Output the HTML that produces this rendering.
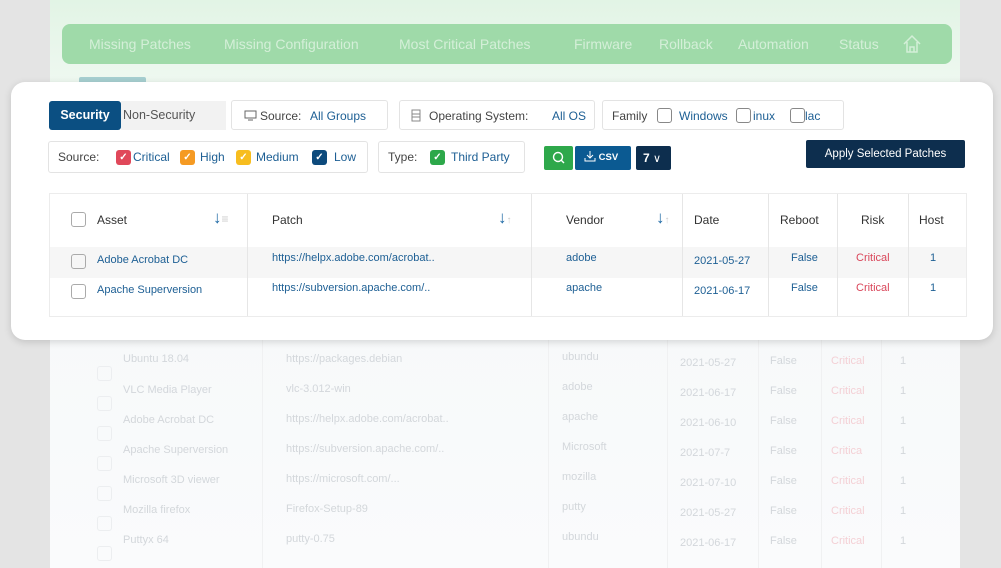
<!DOCTYPE html>
<html><head><meta charset="utf-8"><style>
*{box-sizing:border-box;margin:0;padding:0}
body{width:1001px;height:568px;overflow:hidden;background:#e4e4e4;font-family:"Liberation Sans",sans-serif;position:relative}
.a{position:absolute;white-space:nowrap}
.panel{left:50px;top:0;width:910px;height:568px;background:linear-gradient(#e2f4e5 0,#eef8f0 80px,#f7f9fa 330px,#fafbfc 100%)}
.nav{left:62px;top:24px;width:890px;height:40px;background:#9fdaa9;border-radius:8px;color:#d4efd8;font-size:14px}
.nav span{position:absolute;top:12px;white-space:nowrap}
.card{left:11px;top:82px;width:982px;height:258px;background:#fff;border-radius:14px;box-shadow:0 2px 8px rgba(0,0,0,.15)}
.box{position:absolute;border:1px solid #e3e3e3;border-radius:3px;background:#fff;font-size:12px;color:#444}
.box .a{top:0;line-height:30px}
.bl{color:#1d5f94}
.cb{position:absolute;top:8px;width:15px;height:15px;border-radius:3px;color:#fff;font-size:10px;text-align:center;line-height:15px;font-weight:bold}
.ec{position:absolute;top:7px;width:15px;height:15px;border:1px solid #888;border-radius:3px;background:#fff}
.t{font-size:12px;color:#333}
.vl{position:absolute;width:1px;background:#e6e6e6}
.f{color:#d3d7db;font-size:11px;position:absolute;white-space:nowrap}
.fr{color:#f4d0d5}
.fc{position:absolute;left:97px;width:15px;height:15px;border:1px solid #eceef0;border-radius:3px}
</style></head><body>
<div class="a panel"></div>
<div class="a nav">
<span style="left:27px">Missing Patches</span><span style="left:162px">Missing Configuration</span><span style="left:337px">Most Critical Patches</span><span style="left:512px">Firmware</span><span style="left:597px">Rollback</span><span style="left:676px">Automation</span><span style="left:777px">Status</span>
<svg class="a" style="left:840px;top:10px" width="20" height="20" viewBox="0 0 20 20" fill="none" stroke="#d4efd8" stroke-width="1.5"><path d="M2 10L10 2l8 8M5 8v10h10V8M8 18v-5h4v5"/></svg>
</div>
<div class="a" style="left:79px;top:77px;width:67px;height:8px;background:#a6cfd0;border-radius:2px"></div>

<div class="a" style="left:78px;top:340px;width:857px;height:228px">
<div class="vl" style="left:184px;top:0;height:228px;background:#f0f1f2"></div>
<div class="vl" style="left:470px;top:0;height:228px;background:#f0f1f2"></div>
<div class="vl" style="left:589px;top:0;height:228px;background:#f0f1f2"></div>
<div class="vl" style="left:680px;top:0;height:228px;background:#f0f1f2"></div>
<div class="vl" style="left:743px;top:0;height:228px;background:#f0f1f2"></div>
<div class="vl" style="left:803px;top:0;height:228px;background:#f0f1f2"></div>
</div>
<div class="fc" style="top:366px"></div><div class="fc" style="top:396px"></div><div class="fc" style="top:426px"></div><div class="fc" style="top:456px"></div><div class="fc" style="top:486px"></div><div class="fc" style="top:516px"></div><div class="fc" style="top:546px"></div>
<div class="f" style="left:123px;top:353px">Ubuntu 18.04</div><div class="f" style="left:286px;top:353px">https://packages.debian</div><div class="f" style="left:562px;top:351px">ubundu</div><div class="f" style="left:680px;top:357px">2021-05-27</div><div class="f" style="left:770px;top:355px">False</div><div class="f fr" style="left:831px;top:355px">Critical</div><div class="f" style="left:900px;top:355px">1</div>
<div class="f" style="left:123px;top:384px">VLC Media Player</div><div class="f" style="left:286px;top:383px">vlc-3.012-win</div><div class="f" style="left:562px;top:381px">adobe</div><div class="f" style="left:680px;top:387px">2021-06-17</div><div class="f" style="left:770px;top:385px">False</div><div class="f fr" style="left:831px;top:385px">Critical</div><div class="f" style="left:900px;top:385px">1</div>
<div class="f" style="left:123px;top:414px">Adobe Acrobat DC</div><div class="f" style="left:286px;top:413px">https://helpx.adobe.com/acrobat..</div><div class="f" style="left:562px;top:411px">apache</div><div class="f" style="left:680px;top:417px">2021-06-10</div><div class="f" style="left:770px;top:415px">False</div><div class="f fr" style="left:831px;top:415px">Critical</div><div class="f" style="left:900px;top:415px">1</div>
<div class="f" style="left:123px;top:444px">Apache Superversion</div><div class="f" style="left:286px;top:443px">https://subversion.apache.com/..</div><div class="f" style="left:562px;top:441px">Microsoft</div><div class="f" style="left:680px;top:447px">2021-07-7</div><div class="f" style="left:770px;top:445px">False</div><div class="f fr" style="left:831px;top:445px">Critica</div><div class="f" style="left:900px;top:445px">1</div>
<div class="f" style="left:123px;top:474px">Microsoft 3D viewer</div><div class="f" style="left:286px;top:473px">https://microsoft.com/...</div><div class="f" style="left:562px;top:471px">mozilla</div><div class="f" style="left:680px;top:477px">2021-07-10</div><div class="f" style="left:770px;top:475px">False</div><div class="f fr" style="left:831px;top:475px">Critical</div><div class="f" style="left:900px;top:475px">1</div>
<div class="f" style="left:123px;top:504px">Mozilla firefox</div><div class="f" style="left:286px;top:503px">Firefox-Setup-89</div><div class="f" style="left:562px;top:501px">putty</div><div class="f" style="left:680px;top:507px">2021-05-27</div><div class="f" style="left:770px;top:505px">False</div><div class="f fr" style="left:831px;top:505px">Critical</div><div class="f" style="left:900px;top:505px">1</div>
<div class="f" style="left:123px;top:534px">Puttyx 64</div><div class="f" style="left:286px;top:533px">putty-0.75</div><div class="f" style="left:562px;top:531px">ubundu</div><div class="f" style="left:680px;top:537px">2021-06-17</div><div class="f" style="left:770px;top:535px">False</div><div class="f fr" style="left:831px;top:535px">Critical</div><div class="f" style="left:900px;top:535px">1</div>

<div class="a card"></div>
<div class="a" style="left:49px;top:101px;width:72px;height:29px;background:#0b4f82;border-radius:3px;color:#fff;font-size:12.5px;font-weight:bold;text-align:center;line-height:29px">Security</div>
<div class="a" style="left:121px;top:101px;width:105px;height:29px;background:#f2f2f2;color:#555;font-size:12.5px;line-height:29px;padding-left:2px">Non-Security</div>
<div class="box" style="left:231px;top:100px;width:157px;height:30px">
<svg class="a" style="left:12px;top:9px" width="13" height="11" fill="none" stroke="#666"><rect x="1" y="1" width="11" height="7"/><path d="M4 10h5"/></svg>
<span class="a" style="left:28px">Source:</span><span class="a bl" style="left:78px">All Groups</span></div>
<div class="box" style="left:399px;top:100px;width:196px;height:30px">
<svg class="a" style="left:11px;top:8px" width="10" height="13" fill="none" stroke="#888"><rect x="1" y="1" width="8" height="11"/><path d="M1 5h8M1 8h8"/></svg>
<span class="a" style="left:29px">Operating System:</span><span class="a bl" style="left:152px">All OS</span></div>
<div class="box" style="left:602px;top:100px;width:242px;height:30px">
<span class="a" style="left:9px">Family</span><span class="ec" style="left:54px"></span><span class="a bl" style="left:76px">Windows</span><span class="ec" style="left:133px"></span><span class="a bl" style="left:150px">inux</span><span class="ec" style="left:187px"></span><span class="a bl" style="left:202px">lac</span></div>

<div class="box" style="left:48px;top:141px;width:320px;height:32px">
<span class="a" style="left:9px">Source:</span>
<span class="cb" style="left:67px;background:#e0485a">✓</span><span class="a bl" style="left:84px">Critical</span>
<span class="cb" style="left:131px;background:#f59a23">✓</span><span class="a bl" style="left:151px">High</span>
<span class="cb" style="left:187px;background:#f7bd1f">✓</span><span class="a bl" style="left:207px">Medium</span>
<span class="cb" style="left:263px;background:#0d4a7c">✓</span><span class="a bl" style="left:285px">Low</span></div>
<div class="box" style="left:378px;top:141px;width:147px;height:32px">
<span class="a" style="left:9px">Type:</span><span class="cb" style="left:51px;background:#2da84a">✓</span><span class="a bl" style="left:72px">Third Party</span></div>
<div class="a" style="left:544px;top:146px;width:29px;height:24px;background:#2ea84b;border-radius:2px"><svg width="29" height="24" fill="none" stroke="#fff" stroke-width="1.4"><circle cx="14" cy="11" r="4.5"/><path d="M17 14l3 3"/></svg></div>
<div class="a" style="left:575px;top:146px;width:56px;height:24px;background:#0b5a92;border-radius:2px;color:#fff;font-size:9.5px;font-weight:bold;line-height:24px;padding-left:9px"><svg width="12" height="12" fill="none" stroke="#fff" style="vertical-align:-2px"><path d="M6 1v7M3 5l3 3 3-3M1 8v3h10V8"/></svg> CSV</div>
<div class="a" style="left:636px;top:146px;width:35px;height:24px;background:#0d2e4e;border-radius:2px;color:#fff;font-size:12px;font-weight:bold;line-height:24px;padding-left:7px">7 <span style="font-weight:normal;font-size:11px">∨</span></div>
<div class="a" style="left:806px;top:140px;width:159px;height:28px;background:#0d2e4e;border-radius:2px;color:#fff;font-size:11.5px;text-align:center;line-height:28px">Apply Selected Patches</div>

<div class="a" style="left:49px;top:193px;width:918px;height:124px;border:1px solid #ececec">
<div class="a" style="left:0;top:53px;width:916px;height:31px;background:#f6f6f6"></div>
<div class="vl" style="left:197px;top:0;height:122px"></div>
<div class="vl" style="left:481px;top:0;height:122px"></div>
<div class="vl" style="left:632px;top:0;height:122px"></div>
<div class="vl" style="left:718px;top:0;height:122px"></div>
<div class="vl" style="left:787px;top:0;height:122px"></div>
<div class="vl" style="left:858px;top:0;height:122px"></div>
</div>
<div class="a" style="left:71px;top:212px;width:15px;height:15px;border:1px solid #aaa;border-radius:3px"></div>
<div class="a t" style="left:97px;top:213px">Asset</div>
<div class="a" style="left:213px;top:208px;color:#1f6aa5;font-size:17px">↓<span style="color:#ccc;font-size:12px">≡</span></div>
<div class="a t" style="left:272px;top:213px">Patch</div>
<div class="a" style="left:498px;top:208px;color:#1f6aa5;font-size:17px">↓<span style="color:#ccc;font-size:10px">↑</span></div>
<div class="a t" style="left:566px;top:213px">Vendor</div>
<div class="a" style="left:656px;top:208px;color:#1f6aa5;font-size:17px">↓<span style="color:#ccc;font-size:10px">↑</span></div>
<div class="a t" style="left:694px;top:213px">Date</div>
<div class="a t" style="left:780px;top:213px">Reboot</div>
<div class="a t" style="left:861px;top:213px">Risk</div>
<div class="a t" style="left:919px;top:213px">Host</div>
<div class="a" style="left:71px;top:254px;width:15px;height:15px;border:1px solid #aaa;border-radius:3px"></div>
<div class="a" style="left:71px;top:284px;width:15px;height:15px;border:1px solid #aaa;border-radius:3px"></div>
<div class="a bl" style="left:97px;top:254px;font-size:11px">Adobe Acrobat DC</div>
<div class="a bl" style="left:97px;top:284px;font-size:11px">Apache Superversion</div>
<div class="a bl" style="left:272px;top:252px;font-size:11px">https://helpx.adobe.com/acrobat..</div>
<div class="a bl" style="left:272px;top:282px;font-size:11px">https://subversion.apache.com/..</div>
<div class="a bl" style="left:566px;top:252px;font-size:11px">adobe</div>
<div class="a bl" style="left:566px;top:282px;font-size:11px">apache</div>
<div class="a bl" style="left:694px;top:255px;font-size:11px">2021-05-27</div>
<div class="a bl" style="left:694px;top:285px;font-size:11px">2021-06-17</div>
<div class="a bl" style="left:791px;top:252px;font-size:11px">False</div>
<div class="a bl" style="left:791px;top:282px;font-size:11px">False</div>
<div class="a" style="left:856px;top:252px;font-size:11px;color:#d9465a">Critical</div>
<div class="a" style="left:856px;top:282px;font-size:11px;color:#d9465a">Critical</div>
<div class="a bl" style="left:930px;top:252px;font-size:11px">1</div>
<div class="a bl" style="left:930px;top:282px;font-size:11px">1</div>
</body></html>
